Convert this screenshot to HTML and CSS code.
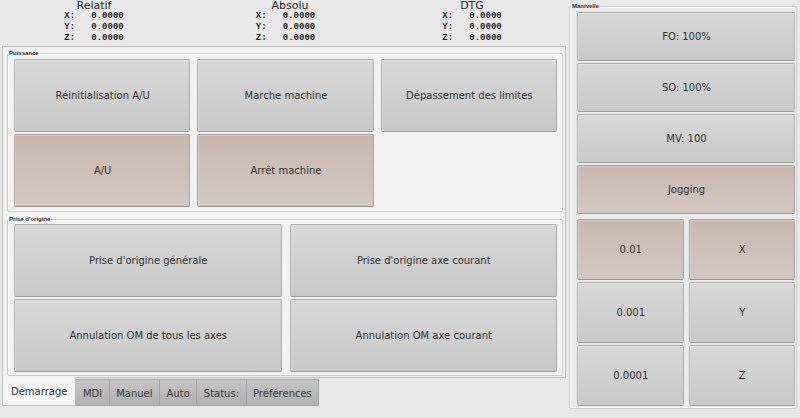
FILE: index.html
```html
<!DOCTYPE html>
<html lang="fr">
<head>
<meta charset="utf-8">
<title>Démarrage</title>
<link rel="stylesheet" href="styles.css">
</head>
<body>
<div class="app">
  <div class="left">
    <div class="dro">
      <div class="dro-col">
        <div class="dro-title">Relatif</div>
        <div class="dro-rows">
          <span class="axis">X:</span><span class="val">0.0000</span>
          <span class="axis">Y:</span><span class="val">0.0000</span>
          <span class="axis">Z:</span><span class="val">0.0000</span>
        </div>
      </div>
      <div class="dro-col">
        <div class="dro-title">Absolu</div>
        <div class="dro-rows shift">
          <span class="axis">X:</span><span class="val">0.0000</span>
          <span class="axis">Y:</span><span class="val">0.0000</span>
          <span class="axis">Z:</span><span class="val">0.0000</span>
        </div>
      </div>
      <div class="dro-col">
        <div class="dro-title">DTG</div>
        <div class="dro-rows">
          <span class="axis">X:</span><span class="val">0.0000</span>
          <span class="axis">Y:</span><span class="val">0.0000</span>
          <span class="axis">Z:</span><span class="val">0.0000</span>
        </div>
      </div>
    </div>

    <div class="pane">
      <div class="group g-power">
        <span class="group-title">Puissance</span>
        <div class="grid3">
          <button class="btn">Réinitialisation A/U</button>
          <button class="btn">Marche machine</button>
          <button class="btn">Dépassement des limites</button>
          <button class="btn warm">A/U</button>
          <button class="btn warm">Arrêt machine</button>
        </div>
      </div>
      <div class="group g-home">
        <span class="group-title">Prise d'origine</span>
        <div class="grid2">
          <button class="btn">Prise d'origine générale</button>
          <button class="btn">Prise d'origine axe courant</button>
          <button class="btn">Annulation OM de tous les axes</button>
          <button class="btn">Annulation OM axe courant</button>
        </div>
      </div>
    </div>

    <div class="tabs">
      <span class="tab active">Démarrage</span>
      <span class="tab">MDI</span>
      <span class="tab">Manuel</span>
      <span class="tab">Auto</span>
      <span class="tab">Status:</span>
      <span class="tab">Préférences</span>
    </div>
  </div>

  <div class="right">
    <div class="group g-jog">
      <span class="group-title">Manivelle</span>
      <div class="jog-stack">
        <button class="btn">FO: 100%</button>
        <button class="btn">SO: 100%</button>
        <button class="btn">MV: 100</button>
        <button class="btn warm">Jogging</button>
      </div>
      <div class="jog-grid">
        <button class="btn warm">0.01</button>
        <button class="btn warm">X</button>
        <button class="btn">0.001</button>
        <button class="btn">Y</button>
        <button class="btn">0.0001</button>
        <button class="btn">Z</button>
      </div>
    </div>
  </div>
</div>
</body>
</html>
```

FILE: styles.css
```css
* { box-sizing: border-box; }

html, body {
  margin: 0;
  padding: 0;
  width: 800px;
  height: 418px;
  overflow: hidden;
  background: #e8e8e8;
  font-family: "DejaVu Sans", "Noto Sans", sans-serif;
  font-size: 10px;
  color: #303030;
}

.app {
  display: flex;
  height: 418px;
}

.left {
  width: 568px;
  display: flex;
  flex-direction: column;
}

/* DRO header */
.dro {
  display: grid;
  grid-template-columns: 188px 204px 160px;
  height: 46px;
}

.dro-col {
  display: flex;
  flex-direction: column;
  align-items: center;
}

.dro-title {
  font-size: 11px;
  line-height: 11px;
  height: 11px;
  color: #2a2a2a;
}

.dro-rows {
  display: grid;
  grid-template-columns: 27px auto;
  font-family: "Liberation Mono", "DejaVu Sans Mono", monospace;
  font-weight: bold;
  font-size: 9px;
  line-height: 11px;
  color: #1e1e1e;
}

.dro-rows.shift { margin-right: 9px; }

/* Tab pane */
.pane {
  margin-left: 2px;
  width: 564px;
  border: 1px solid #bdbdbd;
  background: #f2f2f2;
  padding: 6px 2px 1px 4px;
}

.group {
  position: relative;
  border: 1px solid #cacaca;
  border-radius: 2px;
  box-shadow: inset 0 0 0 1px #fafafa;
}

.group-title {
  position: absolute;
  top: -5px;
  left: 0;
  padding: 0 1px;
  font-family: "Liberation Sans", Arial, sans-serif;
  font-weight: bold;
  font-size: 6px;
  line-height: 8px;
  color: #303030;
  background: #f2f2f2;
}

.g-power {
  padding: 5px 5px 4px 6px;
}

.g-home {
  margin-top: 7px;
  padding: 4px 5px 3px 6px;
}

.grid3 {
  display: grid;
  grid-template-columns: repeat(3, 1fr);
  grid-auto-rows: 73px;
  column-gap: 7px;
  row-gap: 2px;
}

.grid2 {
  display: grid;
  grid-template-columns: 1fr 1fr;
  grid-auto-rows: 73px;
  column-gap: 8px;
  row-gap: 2px;
}

.btn {
  display: flex;
  align-items: center;
  justify-content: center;
  margin: 0;
  padding: 0 0 0 1px;
  font-family: "DejaVu Sans", "Noto Sans", sans-serif;
  font-size: 10px;
  color: #303030;
  border: 1px solid #adadad;
  border-bottom-color: #9c9c9c;
  border-radius: 2px;
  background: linear-gradient(#d8d8d8, #c8c8c8);
  box-shadow: inset 1px 1px 0 rgba(255, 255, 255, 0.25);
}

.btn.warm {
  background: linear-gradient(#c8b7af, #d3c7c1);
  border-color: #aca09a;
  border-bottom-color: #9c918b;
}

/* Tabs */
.tabs {
  display: flex;
  align-items: flex-start;
  margin-left: 2px;
}

.tab {
  display: flex;
  align-items: center;
  height: 27px;
  margin-top: 1px;
  padding: 1px 6.5px 0;
  font-size: 10px;
  color: #333;
  background: linear-gradient(#c6c6c6, #b0b0b0);
  border: 1px solid #a2a2a2;
  border-left-width: 0;
}

.tab.active {
  height: 29px;
  margin-top: -1px;
  padding: 1px 8px 0;
  background: #f4f4f4;
  border: 1px solid #bdbdbd;
  border-top: none;
}

/* Right panel */
.right {
  width: 232px;
  padding: 6px 3px 0 1px;
}

.g-jog {
  height: 403px;
  padding: 5px 1px 3px 7px;
  background: #eaeaea;
}

.g-jog .group-title {
  background: #e8e8e8;
  left: 1px;
}

.jog-stack {
  display: grid;
  grid-auto-rows: 49px;
  row-gap: 2px;
}

.jog-grid {
  margin-top: 5px;
  display: grid;
  grid-template-columns: 1fr 1fr;
  grid-auto-rows: 61px;
  column-gap: 5px;
  row-gap: 2px;
}
```
